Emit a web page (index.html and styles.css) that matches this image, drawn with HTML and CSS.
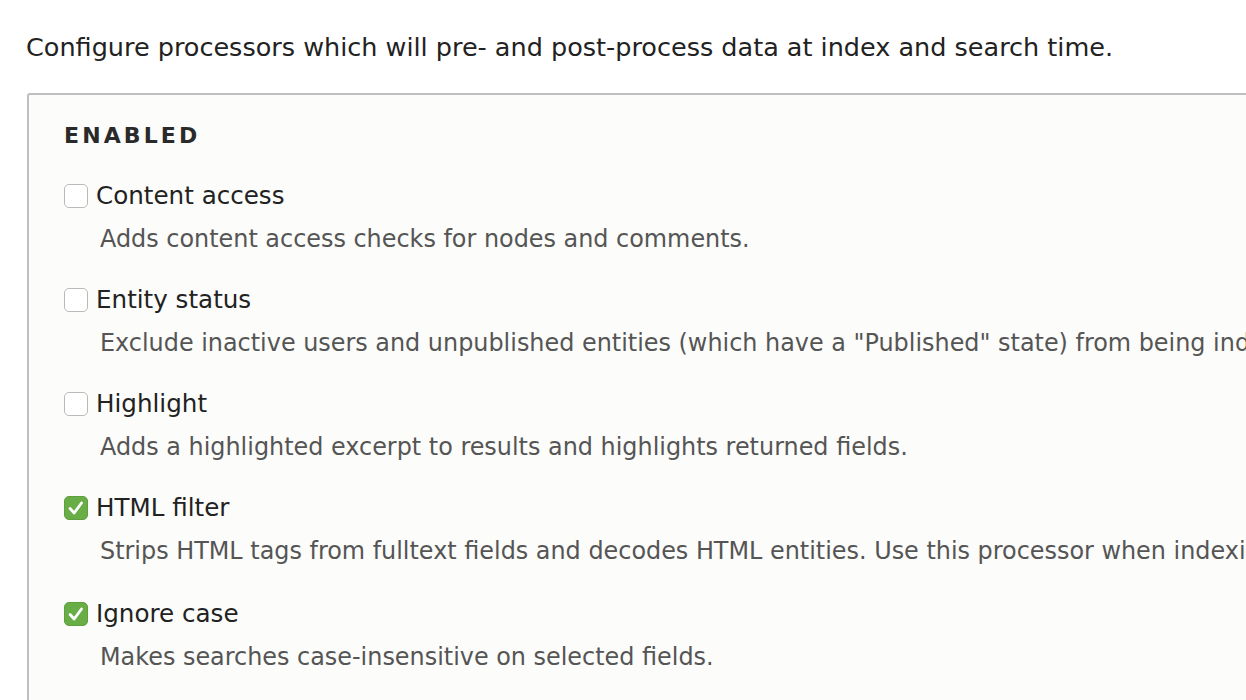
FILE: index.html
```html
<!DOCTYPE html>
<html lang="en">

<head>
    <meta charset="UTF-8">
    <title>Processors</title>
    <link rel="stylesheet" href="styles.css">
</head>

<body>

    <p class="intro">Configure processors which will pre- and post-process data at index and search time.</p>

    <!-- Enabled processors -->
    <fieldset class="processors">
        <h2 class="legend">Enabled</h2>

        <div class="item">
            <label><span class="box"></span>Content access</label>
            <p class="desc">Adds content access checks for nodes and comments.</p>
        </div>

        <div class="item">
            <label><span class="box"></span>Entity status</label>
            <p class="desc">Exclude inactive users and unpublished entities (which have a "Published" state) from being indexed.</p>
        </div>

        <div class="item">
            <label><span class="box"></span>Highlight</label>
            <p class="desc">Adds a highlighted excerpt to results and highlights returned fields.</p>
        </div>

        <div class="item">
            <label><span class="box checked"><svg viewBox="0 0 24 24"><path d="M5.5 12.5l4.5 5 8-11" fill="none" stroke="#fff" stroke-width="3" stroke-linecap="round" stroke-linejoin="round"/></svg></span>HTML filter</label>
            <p class="desc">Strips HTML tags from fulltext fields and decodes HTML entities. Use this processor when indexing HTML data.</p>
        </div>

        <div class="item">
            <label><span class="box checked"><svg viewBox="0 0 24 24"><path d="M5.5 12.5l4.5 5 8-11" fill="none" stroke="#fff" stroke-width="3" stroke-linecap="round" stroke-linejoin="round"/></svg></span>Ignore case</label>
            <p class="desc">Makes searches case-insensitive on selected fields.</p>
        </div>
    </fieldset>

</body>

</html>
```

FILE: styles.css
```css
* {
    margin: 0;
    padding: 0;
    box-sizing: border-box;
}

body {
    background: #fff;
    color: #222;
    font-family: 'DejaVu Sans', sans-serif;
    overflow: hidden;
    width: 1246px;
    height: 700px;
}

.intro {
    font-size: 25.5px;
    line-height: 30px;
    padding: 32px 0 0 26px;
    white-space: nowrap;
}

/* Рамка со списком */
.processors {
    margin: 31px 0 0 27px;
    width: 1400px;
    border: 2px solid #c0bfbd;
    border-radius: 3px;
    background: #fcfcfa;
    padding: 26px 35px 40px;
}

.legend {
    font-size: 22px;
    font-weight: 700;
    text-transform: uppercase;
    letter-spacing: 3.1px;
    color: #2a2a2a;
    line-height: 30px;
    margin-bottom: 30px;
}

.item {
    margin-bottom: 31px;
}

.item:nth-child(5) {
    margin-bottom: 33px;
}

.item label {
    display: flex;
    align-items: center;
    font-size: 24.6px;
    line-height: 30px;
    color: #222;
}

.box {
    width: 24px;
    height: 24px;
    border: 1px solid #b9b9b9;
    border-radius: 5px;
    background: #fff;
    margin-right: 8px;
    display: flex;
}

.box.checked {
    background: #69ad47;
    border-color: #5e9f3e;
}

.box svg {
    width: 100%;
    height: 100%;
}

.desc {
    font-size: 23.9px;
    line-height: 30px;
    color: #555;
    padding-left: 36px;
    margin-top: 13px;
    white-space: nowrap;
}
```
